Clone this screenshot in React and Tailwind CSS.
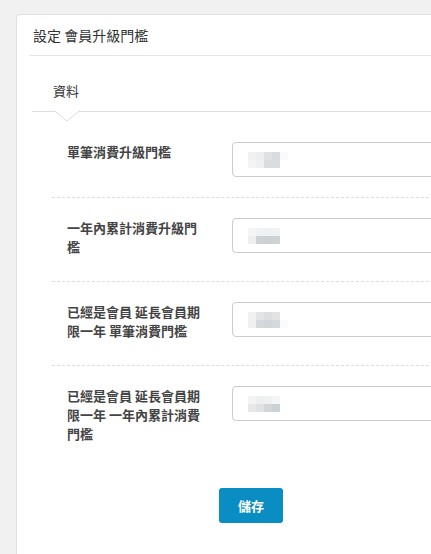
import React from "react";

const rows = [
    { label: "單筆消費升級門檻", blur: [["#f0f1f2", "#eceef0", "#dfe1e3", "#d9dcdf", "#fafafa"], ["#f3f4f5", "#eef0f1", "#dadcdf", "#dadddf", "#ffffff"]] },
    { label: "一年內累計消費升級門檻", blur: [["#f4f5f6", "#f0f1f2", "#eff0f1", "#f0f1f2", "#ffffff"], ["#eceef0", "#cfd2d5", "#cdd0d3", "#cfd2d5", "#ffffff"]] },
    { label: "已經是會員 延長會員期限一年 單筆消費門檻", blur: [["#f0f1f2", "#e2e4e6", "#dcdfe1", "#e1e3e5", "#ffffff"], ["#eff0f1", "#d6d9dc", "#d3d6d9", "#d6d9dc", "#fbfbfb"]] },
    { label: "已經是會員 延長會員期限一年 一年內累計消費門檻", blur: [["#f3f4f5", "#eceef0", "#eef0f1", "#f4f5f6", "#ffffff"], ["#e6e8ea", "#dfe1e3", "#d3d6d9", "#ced1d4", "#ffffff"]] },
];

const BlurValue = ({ blur }) => (
    <div className="flex flex-col">
        {blur.map((line, i) => (
            <div key={i} className="flex">
                {line.map((c, j) => (
                    <div key={j} className="w-[8px] h-[8px]" style={{ background: c }}></div>
                ))}
            </div>
        ))}
    </div>
);

export default function App() {
    return (
        <div className="min-h-[554px] h-[554px] overflow-hidden bg-[#f1f1f1] pt-[14px] pl-[16px] font-['Noto_Sans_CJK_TC','Noto_Sans',sans-serif]">
            <div className="w-[640px] min-h-[560px] bg-white border border-[#e1e1e1] rounded-tl-[4px] px-[12px]">
                {/* header */}
                <div className="h-[41px] flex items-center border-b border-[#e6e6e6] pl-[4px] text-[14px] text-[#333]">
                    設定 會員升級門檻
                </div>

                {/* tabs */}
                <div className="ml-[3px] pt-[25px] border-b border-[#dedede]">
                    <div className="relative w-fit pl-[21px] pr-[21px] pb-[10px] text-[13px] leading-[20px] text-[#333]">
                        資料
                        <svg className="absolute left-[22px] -bottom-[11px]" width="26" height="12" viewBox="0 0 26 12">
                            <polygon points="0,0.5 13,11 26,0.5" fill="#ffffff" />
                            <polyline points="0,0.5 13,11 26,0.5" fill="none" stroke="#dcdcdc" strokeWidth="1" />
                        </svg>
                    </div>
                </div>

                {/* form */}
                <div className="ml-[23px] pt-[10px]">
                    {rows.map((row, i) => (
                        <div key={i} className={`flex items-start py-[20px] ${i > 0 ? "border-t border-dashed border-[#dddddd]" : ""}`}>
                            <div className="w-[15px] shrink-0"></div>
                            <div className="w-[136px] shrink-0 mr-[29px] mb-[5px] text-[13px] leading-[19px] font-bold text-[#444]">
                                {row.label}
                            </div>
                            <div className="w-[320px] h-[35px] shrink-0 border border-[#cccccc] rounded-[4px] flex items-center pl-[15px]">
                                <BlurValue blur={row.blur} />
                            </div>
                        </div>
                    ))}

                    <div className="pt-[20px] pl-[167px]">
                        <button className="w-[64px] h-[35px] rounded-[3px] bg-[#0a8dc2] text-white text-[13px] font-bold">
                            儲存
                        </button>
                    </div>
                </div>
            </div>
        </div>
    );
}
